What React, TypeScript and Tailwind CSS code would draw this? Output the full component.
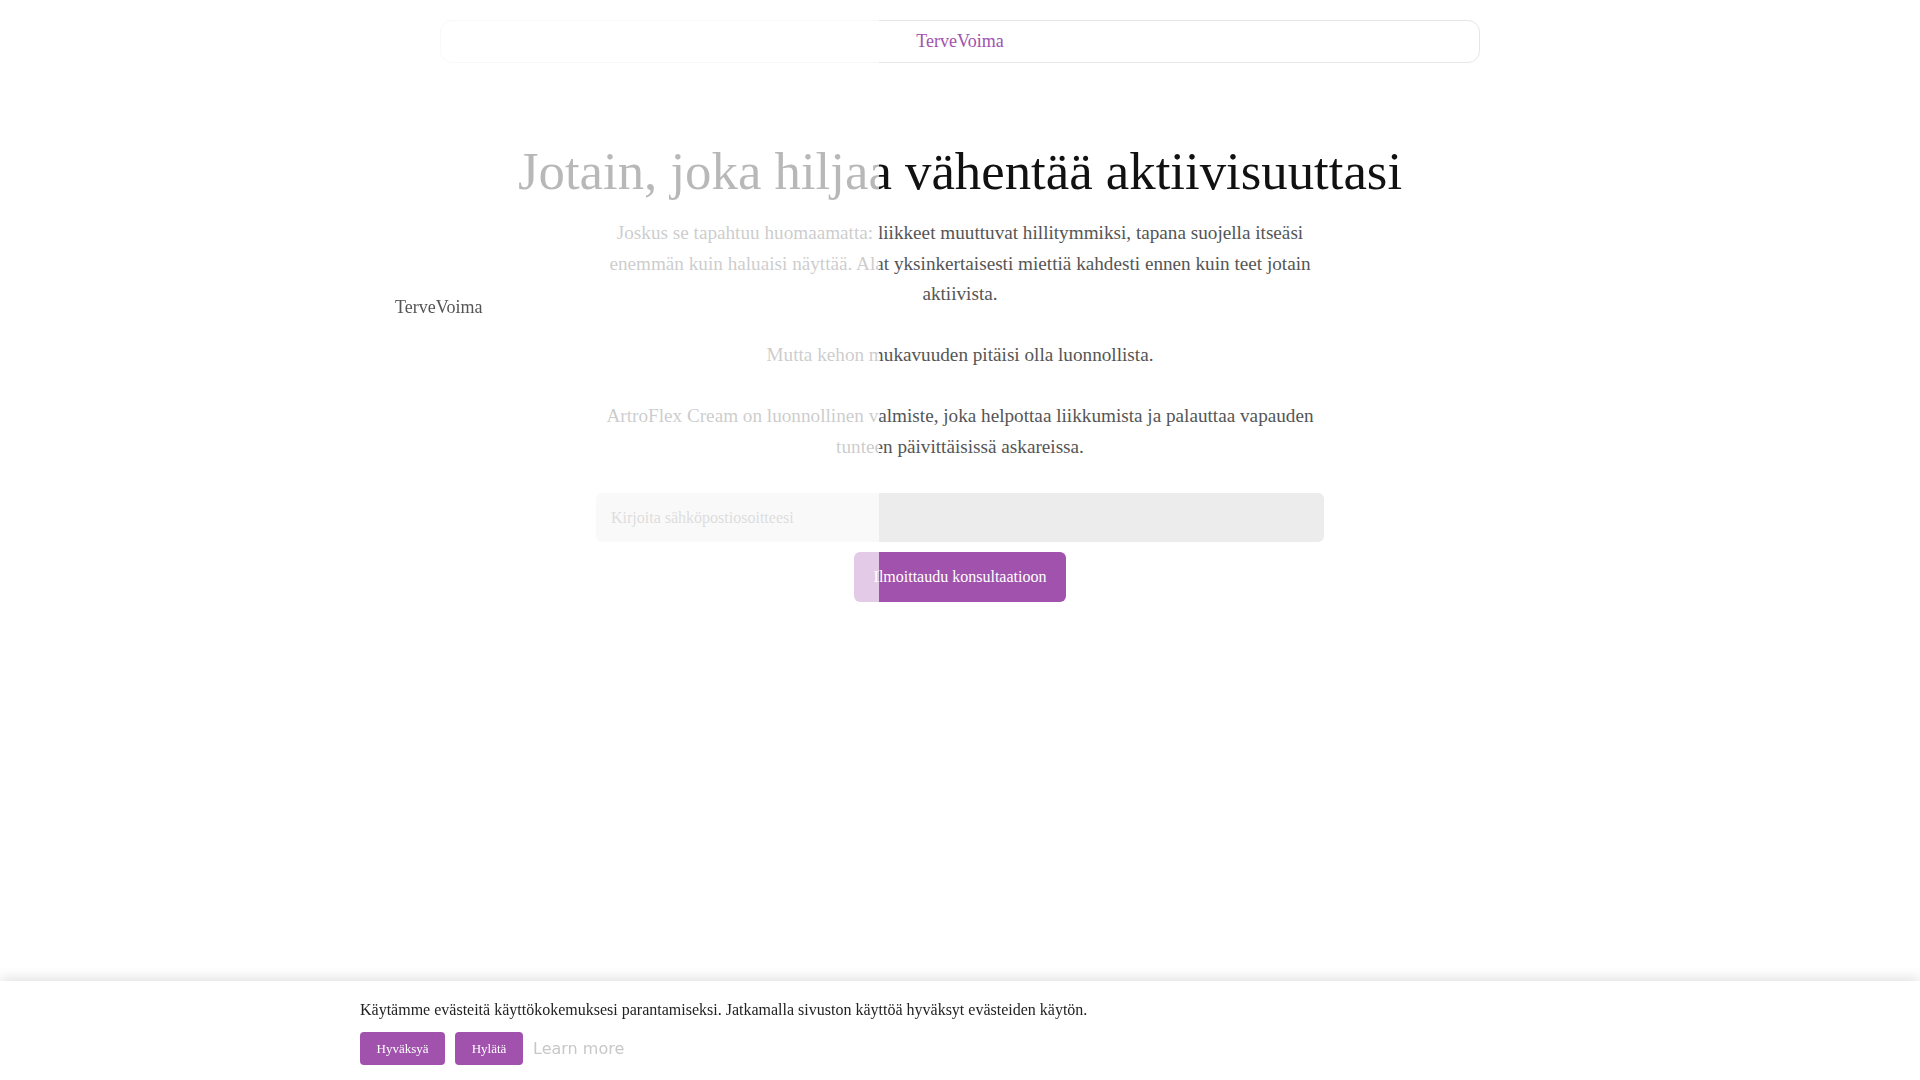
const serif = { fontFamily: '"Liberation Serif", "Times New Roman", serif' };

export default function App() {
  return (
    <div className="relative min-h-screen bg-white text-[#111]" style={serif}>
      {/* Header */}
      <div className="px-4 pt-5">
        <header className="mx-auto flex h-[43px] max-w-[1040px] items-center justify-center rounded-xl border border-[#e6e6e6] bg-white">
          <span className="text-[18px] text-[#a052ad]">TerveVoima</span>
        </header>
      </div>

      {/* Hero */}
      <main className="flex flex-col items-center px-4 pt-[77px]">
        <h1 className="text-center text-[52.8px] leading-[63px] text-[#111]">
          Jotain, joka hiljaa vähentää aktiivisuuttasi
        </h1>
        <div className="mt-[15px] max-w-[740px] text-center text-[19.2px] leading-[30.7px] text-[#555]">
          <p>
            Joskus se tapahtuu huomaamatta: liikkeet muuttuvat hillitymmiksi, tapana suojella itseäsi
            enemmän kuin haluaisi näyttää. Alat yksinkertaisesti miettiä kahdesti ennen kuin teet jotain
            aktiivista.
          </p>
          <p className="mt-[30px]">Mutta kehon mukavuuden pitäisi olla luonnollista.</p>
          <p className="mt-[30px]">
            ArtroFlex Cream on luonnollinen valmiste, joka helpottaa liikkumista ja palauttaa vapauden
            tunteen päivittäisissä askareissa.
          </p>
        </div>

        <form className="mt-[31px] flex w-full max-w-[728px] flex-col items-center gap-[10px]">
          <input
            type="email"
            placeholder="Kirjoita sähköpostiosoitteesi"
            className="h-[49px] w-full rounded-md bg-[#ececec] px-[15px] text-[16px] outline-none placeholder:text-[#8a8a8a]"
            style={serif}
          />
          <button
            type="button"
            className="h-[50px] w-[212px] rounded-md bg-[#a052ad] text-[16px] text-white"
            style={serif}
          >
            Ilmoittaudu konsultaatioon
          </button>
        </form>
      </main>

      {/* Side panel */}
      <aside className="fixed left-0 top-0 z-10 h-full w-[879px] bg-white/70 pl-[395px] pt-[294px]">
        <span className="text-[18px] text-[#555]">TerveVoima</span>
      </aside>

      {/* Cookie banner */}
      <div className="fixed bottom-0 left-0 right-0 z-20 h-[99px] bg-white shadow-[0_-3px_12px_rgba(0,0,0,0.12)]">
        <div className="mx-auto max-w-[1200px] pt-[19px]">
          <p className="text-[16px] leading-[20px] text-[#222]">
            Käytämme evästeitä käyttökokemuksesi parantamiseksi. Jatkamalla sivuston käyttöä hyväksyt evästeiden käytön.
          </p>
          <div className="mt-[12px] flex items-center gap-[10px]">
            <button className="h-[33px] w-[85px] rounded bg-[#a052ad] text-[13px] text-white" style={serif}>
              Hyväksyä
            </button>
            <button className="h-[33px] w-[68px] rounded bg-[#a052ad] text-[13px] text-white" style={serif}>
              Hylätä
            </button>
            <a className="text-[16px] text-[#c8c8c8]" style={{ fontFamily: '"DejaVu Sans", sans-serif' }}>
              Learn more
            </a>
          </div>
        </div>
      </div>
    </div>
  );
}
